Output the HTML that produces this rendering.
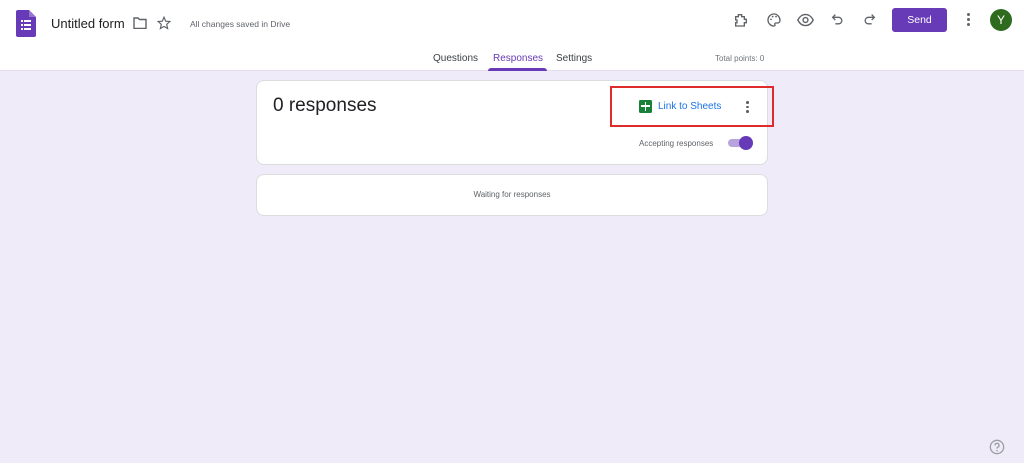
<!DOCTYPE html>
<html><head><meta charset="utf-8"><style>
*{margin:0;padding:0;box-sizing:border-box}
body{width:1024px;height:463px;background:#f0ebf8;font-family:"Liberation Sans",sans-serif;position:relative;overflow:hidden}
.hdr{position:absolute;left:0;top:0;width:1024px;height:71px;background:#fff;border-bottom:1px solid #e3dcef}
.a{position:absolute}
.t{color:#202124}
.card{position:absolute;left:256px;width:512px;background:#fff;border:1px solid #dadce0;border-radius:8px}
</style></head><body>
<div class="hdr">
 <svg class="a" style="left:16px;top:10px" width="20" height="27" viewBox="0 0 20 27"><path d="M2 0h11l7 7v18a2 2 0 0 1-2 2H2a2 2 0 0 1-2-2V2a2 2 0 0 1 2-2z" fill="#673ab7"/><path d="M13 0v7h7z" fill="#9575cd"/><g fill="#fff"><rect x="5" y="10" width="2" height="2"/><rect x="8" y="10" width="7" height="2"/><rect x="5" y="14" width="2" height="2"/><rect x="8" y="14" width="7" height="2"/><rect x="5" y="18" width="2" height="2"/><rect x="8" y="18" width="7" height="2"/></g></svg>
 <div class="a t" style="left:51px;top:16px;font-size:13px">Untitled form</div>
 <svg class="a" style="left:133px;top:17px" width="14" height="12" viewBox="0 0 14 12"><path d="M1 1h4l1.5 1.5H13v9H1z" fill="none" stroke="#5f6368" stroke-width="1.4"/></svg>
 <svg class="a" style="left:157px;top:16px" width="14" height="14" viewBox="0 0 24 24"><path d="M12 2l2.9 6.9 7.1.6-5.4 4.7 1.6 7.3L12 17.8 5.8 21.5l1.6-7.3L2 9.5l7.1-.6z" fill="none" stroke="#5f6368" stroke-width="2"/></svg>
 <div class="a" style="left:190px;top:19px;font-size:8.5px;color:#5f6368">All changes saved in Drive</div>
 <svg class="a" style="left:733px;top:12px" width="16" height="16" viewBox="0 0 24 24"><path d="M4 7h4V4h5v3h4v4h3v5h-3v5H4v-5h2v-4H4z" fill="none" stroke="#5f6368" stroke-width="2"/></svg>
 <svg class="a" style="left:766px;top:12px" width="16" height="16" viewBox="0 0 24 24"><path d="M12 3a9 9 0 0 0 0 18c1.5 0 2-1 1.3-2-.7-1 0-2.5 1.5-2.5H17a4 4 0 0 0 4-4c0-5-4-9.5-9-9.5z" fill="none" stroke="#5f6368" stroke-width="2"/><circle cx="7.5" cy="11" r="1.3" fill="#5f6368"/><circle cx="10" cy="7" r="1.3" fill="#5f6368"/><circle cx="15" cy="7" r="1.3" fill="#5f6368"/></svg>
 <svg class="a" style="left:797px;top:13px" width="17" height="14" viewBox="0 0 24 20"><path d="M1 10C4 4 8 2 12 2s8 2 11 8c-3 6-7 8-11 8S4 16 1 10z" fill="none" stroke="#5f6368" stroke-width="2"/><circle cx="12" cy="10" r="3.5" fill="none" stroke="#5f6368" stroke-width="2"/></svg>
 <svg class="a" style="left:831px;top:13px" width="13" height="13" viewBox="0 0 24 24"><path d="M8 3L3 8l5 5M3 8h11a6 6 0 0 1 0 12H8" fill="none" stroke="#5f6368" stroke-width="2.4"/></svg>
 <svg class="a" style="left:863px;top:13px" width="13" height="13" viewBox="0 0 24 24"><path d="M16 3l5 5-5 5M21 8H10a6 6 0 0 0 0 12h6" fill="none" stroke="#5f6368" stroke-width="2.4"/></svg>
 <div class="a" style="left:892px;top:8px;width:55px;height:24px;background:#673ab7;border-radius:3px;color:#fff;font-size:10.5px;text-align:center;line-height:24px">Send</div>
 <div class="a" style="left:967px;top:13px;width:3px"><div style="width:3px;height:3px;background:#5f6368;border-radius:50%;margin-bottom:2px"></div><div style="width:3px;height:3px;background:#5f6368;border-radius:50%;margin-bottom:2px"></div><div style="width:3px;height:3px;background:#5f6368;border-radius:50%"></div></div>
 <div class="a" style="left:990px;top:9px;width:22px;height:22px;border-radius:50%;background:#2e6b1f;color:#fff;font-size:12px;text-align:center;line-height:22px">Y</div>
 <div class="a t" style="left:433px;top:53px;font-size:10px;color:#3c4043">Questions</div>
 <div class="a" style="left:493px;top:53px;font-size:10px;color:#673ab7">Responses</div>
 <div class="a" style="left:488px;top:68px;width:59px;height:3px;background:#673ab7;border-radius:3px 3px 0 0"></div>
 <div class="a t" style="left:556px;top:53px;font-size:10px;color:#3c4043">Settings</div>
 <div class="a" style="left:715px;top:54px;font-size:8px;color:#70757a">Total points: 0</div>
</div>
<div class="card" style="top:80px;height:85px">
 <div class="a t" style="left:16px;top:14px;font-size:19px">0 responses</div>
 <div class="a" style="left:382px;top:19px;width:13px;height:13px;background:#188038;border-radius:1.5px"><div class="a" style="left:2px;top:5px;width:9px;height:1.5px;background:#fff"></div><div class="a" style="left:5.5px;top:2px;width:1.5px;height:9px;background:#fff"></div></div>
 <div class="a" style="left:401px;top:20px;font-size:10px;color:#1a73e8">Link to Sheets</div>
 <div class="a" style="left:489px;top:20px;width:3px"><div style="width:2.5px;height:2.5px;background:#5f6368;border-radius:50%;margin-bottom:2px"></div><div style="width:2.5px;height:2.5px;background:#5f6368;border-radius:50%;margin-bottom:2px"></div><div style="width:2.5px;height:2.5px;background:#5f6368;border-radius:50%"></div></div>
 <div class="a" style="left:382px;top:58px;font-size:8px;color:#5f6368">Accepting responses</div>
 <div class="a" style="left:471px;top:58px;width:22px;height:8px;border-radius:4px;background:#b8a3dd"></div>
 <div class="a" style="left:482px;top:55px;width:14px;height:14px;border-radius:50%;background:#673ab7"></div>
</div>
<div class="a" style="left:610px;top:86px;width:164px;height:41px;border:2px solid #e02b2b"></div>
<div class="card" style="top:174px;height:42px">
 <div style="text-align:center;font-size:8px;color:#5f6368;line-height:40px">Waiting for responses</div>
</div>
<svg class="a" style="left:989px;top:439px" width="16" height="16" viewBox="0 0 24 24"><circle cx="12" cy="12" r="10" fill="none" stroke="#9aa0a6" stroke-width="2"/><path d="M9 9.5a3 3 0 1 1 4 2.8c-.7.3-1 .9-1 1.7v.5" fill="none" stroke="#9aa0a6" stroke-width="2"/><circle cx="12" cy="17.5" r="1.2" fill="#9aa0a6"/></svg>
</body></html>
